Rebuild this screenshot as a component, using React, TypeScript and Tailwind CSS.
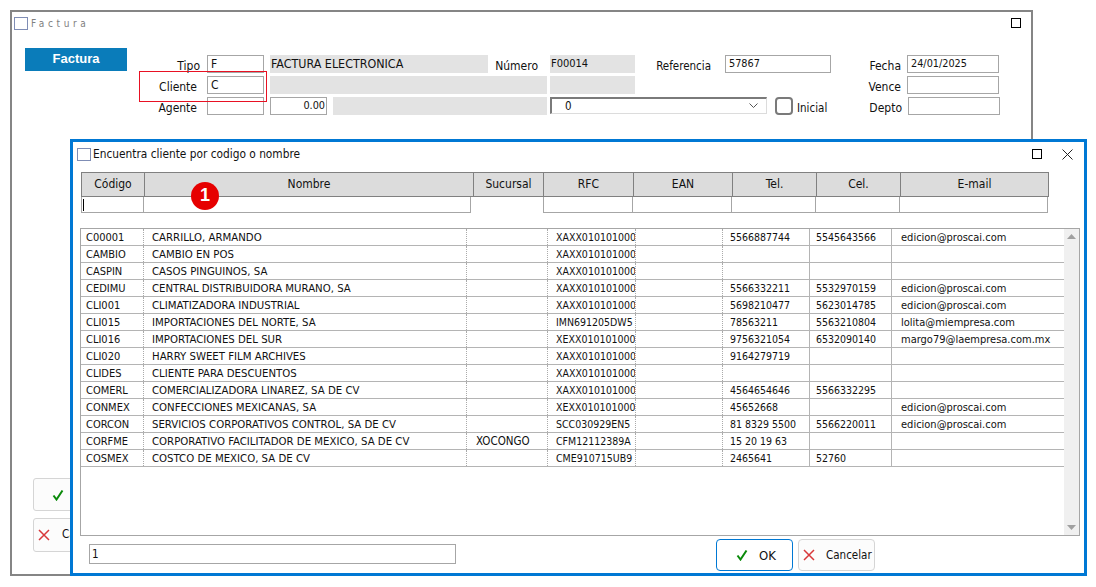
import React from 'react';

type Row = { code: string; name: string; branch?: string; rfc: string; tel?: string; cel?: string; email?: string };

const rows: Row[] = [
  { code: 'C00001', name: 'CARRILLO, ARMANDO', rfc: 'XAXX010101000', tel: '5566887744', cel: '5545643566', email: 'edicion@proscai.com' },
  { code: 'CAMBIO', name: 'CAMBIO EN POS', rfc: 'XAXX010101000' },
  { code: 'CASPIN', name: 'CASOS PINGUINOS, SA', rfc: 'XAXX010101000' },
  { code: 'CEDIMU', name: 'CENTRAL DISTRIBUIDORA MURANO, SA', rfc: 'XAXX010101000', tel: '5566332211', cel: '5532970159', email: 'edicion@proscai.com' },
  { code: 'CLI001', name: 'CLIMATIZADORA INDUSTRIAL', rfc: 'XAXX010101000', tel: '5698210477', cel: '5623014785', email: 'edicion@proscai.com' },
  { code: 'CLI015', name: 'IMPORTACIONES DEL NORTE, SA', rfc: 'IMN691205DW5', tel: '78563211', cel: '5563210804', email: 'lolita@miempresa.com' },
  { code: 'CLI016', name: 'IMPORTACIONES DEL SUR', rfc: 'XEXX010101000', tel: '9756321054', cel: '6532090140', email: 'margo79@laempresa.com.mx' },
  { code: 'CLI020', name: 'HARRY SWEET FILM ARCHIVES', rfc: 'XAXX010101000', tel: '9164279719' },
  { code: 'CLIDES', name: 'CLIENTE PARA DESCUENTOS', rfc: 'XAXX010101000' },
  { code: 'COMERL', name: 'COMERCIALIZADORA LINAREZ, SA DE CV', rfc: 'XAXX010101000', tel: '4564654646', cel: '5566332295' },
  { code: 'CONMEX', name: 'CONFECCIONES MEXICANAS, SA', rfc: 'XEXX010101000', tel: '45652668', email: 'edicion@proscai.com' },
  { code: 'CORCON', name: 'SERVICIOS CORPORATIVOS CONTROL, SA DE CV', rfc: 'SCC030929EN5', tel: '81 8329 5500', cel: '5566220011', email: 'edicion@proscai.com' },
  { code: 'CORFME', name: 'CORPORATIVO FACILITADOR DE MEXICO, SA DE CV', branch: 'XOCONGO', rfc: 'CFM12112389A', tel: '15 20 19 63' },
  { code: 'COSMEX', name: 'COSTCO DE MEXICO, SA DE CV', rfc: 'CME910715UB9', tel: '2465641', cel: '52760' },
];

const headers = [
  { label: 'Código', w: 'w-[64px]' },
  { label: 'Nombre', w: 'w-[330px]' },
  { label: 'Sucursal', w: 'w-[71px]' },
  { label: 'RFC', w: 'w-[91px]' },
  { label: 'EAN', w: 'w-[100px]' },
  { label: 'Tel.', w: 'w-[85px]' },
  { label: 'Cel.', w: 'w-[85px]' },
  { label: 'E-mail', w: 'w-[149px]' },
];

const CheckIcon = () => (
  <svg width="12" height="12" viewBox="0 0 12 12" fill="none">
    <path d="M1.5 6.5 L4.5 10.5 L10.5 1.5" stroke="#0a8a0a" strokeWidth="2" />
  </svg>
);

const CrossIcon = () => (
  <svg width="12" height="12" viewBox="0 0 12 12" fill="none">
    <path d="M1 1 L11 11 M11 1 L1 11" stroke="#d8383a" strokeWidth="1.5" />
  </svg>
);

const WindowIcon = () => <div className="w-[14px] h-[13px] border border-[#7f8db5] bg-white shrink-0" />;

const Field = ({ w, value, right, big }: { w: string; value?: string; right?: boolean; big?: boolean }) => (
  <div className={`${w} h-[18px] border border-[#a6a6a6] bg-white leading-[16px] shrink-0 ${big ? 'text-[12px]' : 'text-[10.8px]'} ${right ? 'text-right pr-[1px]' : 'pl-[3px]'}`}>{value}</div>
);

const Gray = ({ w, value }: { w: string; value?: string }) => (
  <div className={`${w} h-[18px] bg-[#e3e3e3] px-[1px] leading-[17px] text-[11px] shrink-0`}>{value}</div>
);

const Label = ({ w, children }: { w: string; children: React.ReactNode }) => (
  <div className={`${w} h-[18px] leading-[23px] text-[12px] text-right shrink-0`}>{children}</div>
);

export default function App() {
  return (
    <div className="relative w-[1096px] h-[587px] bg-white overflow-hidden text-[11.5px] text-[#111] font-['DejaVu_Sans_Condensed','Noto_Sans',sans-serif]">
      {/* ventana de atras */}
      <div className="absolute left-[10px] top-[10px] w-[1023px] h-[566px] border-2 border-[#858585] flex flex-col">
        <div className="flex items-center h-[22px] pl-[2px] pr-[10px] shrink-0">
          <WindowIcon />
          <span className="ml-[3px] tracking-[3.6px] text-[#808080] text-[10px]">Factura</span>
          <div className="ml-auto w-[10px] h-[10px] border border-black" />
        </div>
        <div className="flex pl-[13px] pt-[14px] shrink-0">
          <div className="w-[102px] h-[23px] bg-[#0a7cba] text-white font-bold text-[13px] text-center leading-[22px] shrink-0 font-['Liberation_Sans',sans-serif]">Factura</div>
          <div className="flex flex-col gap-[3px] pt-[7px]">
            <div className="flex">
              <Label w="w-[73px]">Tipo</Label>
              <div className="w-[7px]" />
              <Field w="w-[57px]" value="F" big />
              <div className="w-[6px]" />
              <div className="w-[218px] h-[18px] bg-[#e3e3e3] px-[1px] leading-[17px] text-[12.4px] shrink-0">FACTURA ELECTRONICA</div>
              <Label w="w-[50px]">Número</Label>
              <div className="w-[12px]" />
              <Gray w="w-[85px]" value="F00014" />
              <Label w="w-[76px]"><span className="text-[11.5px]">Referencia</span></Label>
              <div className="w-[14px]" />
              <Field w="w-[106px]" value="57867" />
              <Label w="w-[70px]">Fecha</Label>
              <div className="w-[6px]" />
              <Field w="w-[92px]" value="24/01/2025" />
            </div>
            <div className="flex">
              <Label w="w-[70px]">Cliente</Label>
              <div className="w-[10px]" />
              <Field w="w-[57px]" value="C" big />
              <div className="w-[6px]" />
              <Gray w="w-[277px]" />
              <div className="w-[3px]" />
              <Gray w="w-[85px]" />
              <Label w="w-[266px]">Vence</Label>
              <div className="w-[6px]" />
              <Field w="w-[92px]" />
            </div>
            <div className="flex">
              <Label w="w-[70px]">Agente</Label>
              <div className="w-[10px]" />
              <Field w="w-[57px]" />
              <div className="w-[6px]" />
              <Field w="w-[57px]" value="0.00" right />
              <div className="w-[6px]" />
              <Gray w="w-[214px]" />
              <div className="w-[3px]" />
              <div className="w-[217px] h-[17px] border-t-2 border-l-2 border-t-[#7a7a7a] border-l-[#7a7a7a] border-b border-r border-b-[#dcdcdc] border-r-[#dcdcdc] flex items-center justify-between pl-[13px] pr-[8px] shrink-0">
                <span className="pt-[1px]">0</span>
                <svg width="9" height="6" viewBox="0 0 9 6" fill="none"><path d="M0.5 0.5 L4.5 4.5 L8.5 0.5" stroke="#555" /></svg>
              </div>
              <div className="w-[8px]" />
              <div className="w-[18px] h-[18px] border-2 border-[#7a7a7a] rounded-[4px] shrink-0" />
              <div className="ml-[4px] w-[32px] leading-[22px]">Inicial</div>
              <Label w="w-[73px]">Depto</Label>
              <div className="w-[6px]" />
              <Field w="w-[92px]" />
            </div>
          </div>
        </div>
        <div className="mt-auto mb-[22px] ml-[21px] flex flex-col gap-[7px]">
          <div className="w-[80px] h-[33px] border border-[#d5d5d5] rounded-[3px] bg-[#fcfcfc] flex items-center pl-[18px]"><CheckIcon /></div>
          <div className="w-[80px] h-[34px] border border-[#d5d5d5] rounded-[3px] bg-[#fcfcfc] flex items-center pl-[4px] gap-[12px]"><CrossIcon /><span>Cancelar</span></div>
        </div>
        {/* marco rojo de Cliente */}
        <div className="absolute left-[127px] top-[59px] w-[128px] h-[31px] border border-[#e81123]" />
      </div>

      {/* dialogo de busqueda */}
      <div className="absolute left-[70px] top-[139px] w-[1017px] h-[437px] border-[3px] border-[#0078d4] bg-white flex flex-col">
        <div className="flex items-center h-[24px] pl-[4px] shrink-0">
          <WindowIcon />
          <span className="ml-[2px] pt-[2px] text-[11.8px]">Encuentra cliente por codigo o nombre</span>
          <div className="ml-auto w-[10px] h-[10px] border border-black" />
          <svg className="ml-[20px] mr-[11px]" width="11" height="11" viewBox="0 0 11 11" fill="none"><path d="M0.5 0.5 L10.5 10.5 M10.5 0.5 L0.5 10.5" stroke="#222" /></svg>
        </div>
        <div className="pl-[8px] pr-[4px] mt-[6px] shrink-0">
          <div className="flex">
            {headers.map((h) => (
              <div key={h.label} className={`${h.w} h-[25px] bg-[#dcdcdc] border border-[#808080] -ml-[1px] first:ml-0 text-center text-[12px] leading-[22px] shrink-0`}>{h.label}</div>
            ))}
          </div>
          <div className="flex h-[16px]">
            <div className="w-[63px] border border-t-0 border-[#a6a6a6] flex items-center pl-[1px]"><div className="w-px h-[12px] bg-black" /></div>
            <div className="w-[327px] border border-t-0 border-l-0 border-[#a6a6a6]" />
            <div className="w-[72px]" />
            <div className="w-[90px] border border-t-0 border-[#a6a6a6]" />
            <div className="w-[99px] border border-t-0 border-l-0 border-[#a6a6a6]" />
            <div className="w-[84px] border border-t-0 border-l-0 border-[#a6a6a6]" />
            <div className="w-[84px] border border-t-0 border-l-0 border-[#a6a6a6]" />
            <div className="w-[148px] border border-t-0 border-l-0 border-[#a6a6a6]" />
          </div>
        </div>
        <div className="ml-[7px] mr-[4px] mt-[15px] h-[308px] border border-[#a6a6a6] flex overflow-hidden shrink-0">
          <div className="flex-1 min-w-0">
            {rows.map((r) => (
              <div key={r.code} className="flex h-[17px] border-b border-[#b4b4b4] leading-[16px]">
                <div className="w-[63px] pl-[5px] text-[11px] leading-[18px] border-r border-dotted border-[#aaa] shrink-0">{r.code}</div>
                <div className="w-[323px] pl-[8px] text-[11.3px] leading-[18px] border-r border-dotted border-[#aaa] shrink-0 whitespace-nowrap">{r.name}</div>
                <div className="w-[81px] pl-[9px] border-r border-dotted border-[#aaa] shrink-0">{r.branch}</div>
                <div className="w-[88px] pl-[8px] text-[10.5px] leading-[16px] border-r border-dotted border-[#aaa] shrink-0 overflow-hidden whitespace-nowrap">{r.rfc}</div>
                <div className="w-[87px] border-r border-dotted border-[#aaa] shrink-0" />
                <div className="w-[87px] pl-[7px] text-[10.5px] leading-[16px] border-r border-[#b4b4b4] shrink-0">{r.tel}</div>
                <div className="w-[82px] pl-[6px] text-[10.5px] leading-[16px] border-r border-[#b4b4b4] shrink-0">{r.cel}</div>
                <div className="pl-[9px] text-[11px] leading-[18px] whitespace-nowrap">{r.email}</div>
              </div>
            ))}
          </div>
          <div className="w-[15px] bg-[#f0f0f0] flex flex-col items-center justify-between py-[5px] shrink-0">
            <svg width="9" height="5" viewBox="0 0 9 5"><path d="M4.5 0 L9 5 L0 5 Z" fill="#a0a0a0" /></svg>
            <svg width="9" height="5" viewBox="0 0 9 5"><path d="M0 0 L9 0 L4.5 5 Z" fill="#a0a0a0" /></svg>
          </div>
        </div>
        <div className="flex items-center mt-[3px] pl-[16px] h-[32px] shrink-0">
          <div className="w-[367px] h-[20px] border border-[#a6a6a6] px-[2px] leading-[18px] -mt-[3px]">1</div>
          <div className="ml-[260px] w-[77px] h-[32px] border border-[#0078d4] rounded-[4px] flex items-center pl-[19px] gap-[11px]"><CheckIcon /><span className="text-[13px] pt-[1px]">OK</span></div>
          <div className="ml-[5px] w-[77px] h-[32px] border border-[#d5d5d5] rounded-[4px] bg-[#fcfcfc] flex items-center pl-[4px] gap-[11px]"><CrossIcon /><span className="pt-[1px]">Cancelar</span></div>
        </div>
      </div>

      {/* marcador 1 */}
      <div className="absolute left-[191px] top-[182px] w-[28px] h-[28px] rounded-full bg-[#e60000] text-white font-bold text-[18px] leading-[27px] text-center font-['Liberation_Sans',sans-serif]">1</div>
    </div>
  );
}
